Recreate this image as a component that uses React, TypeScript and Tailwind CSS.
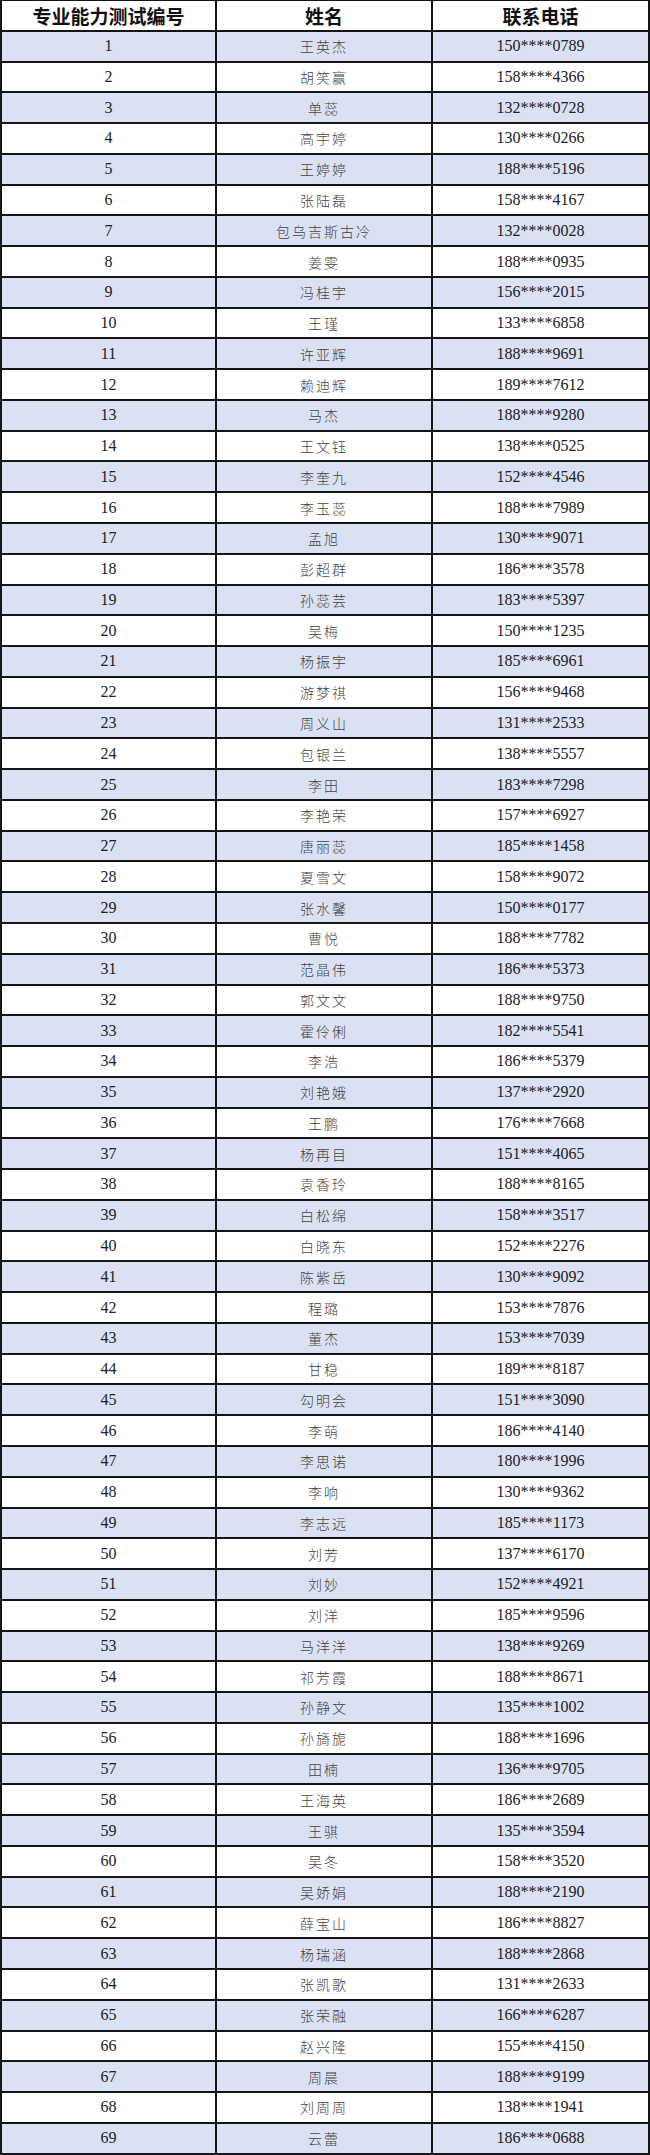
import React from "react";

const raw = `王英杰 150****0789
胡笑赢 158****4366
单蕊 132****0728
高宇婷 130****0266
王婷婷 188****5196
张陆磊 158****4167
包乌吉斯古冷 132****0028
姜雯 188****0935
冯桂宇 156****2015
王瑾 133****6858
许亚辉 188****9691
赖迪辉 189****7612
马杰 188****9280
王文钰 138****0525
李奎九 152****4546
李玉蕊 188****7989
孟旭 130****9071
彭超群 186****3578
孙蕊芸 183****5397
吴梅 150****1235
杨振宇 185****6961
游梦祺 156****9468
周义山 131****2533
包银兰 138****5557
李田 183****7298
李艳荣 157****6927
唐丽蕊 185****1458
夏雪文 158****9072
张水馨 150****0177
曹悦 188****7782
范晶伟 186****5373
郭文文 188****9750
霍伶俐 182****5541
李浩 186****5379
刘艳娥 137****2920
王鹏 176****7668
杨再目 151****4065
袁香玲 188****8165
白松绵 158****3517
白晓东 152****2276
陈紫岳 130****9092
程璐 153****7876
董杰 153****7039
甘稳 189****8187
勾明会 151****3090
李萌 186****4140
李思诺 180****1996
李响 130****9362
李志远 185****1173
刘芳 137****6170
刘妙 152****4921
刘洋 185****9596
马洋洋 138****9269
祁芳霞 188****8671
孙静文 135****1002
孙旖旎 188****1696
田楠 136****9705
王海英 186****2689
王骐 135****3594
吴冬 158****3520
吴娇娟 188****2190
薛宝山 186****8827
杨瑞涵 188****2868
张凯歌 131****2633
张荣融 166****6287
赵兴隆 155****4150
周晨 188****9199
刘周周 138****1941
云蕾 186****0688`;

const rows = raw.split("\n").map((l, i) => {
  const [name, phone] = l.split(" ");
  return { id: i + 1, name, phone };
});

const serif = "font-['Liberation_Serif','Noto_Sans_CJK_SC',serif]";
const cjk = "font-['Noto_Sans_CJK_SC',sans-serif]";

export default function App() {
  return (
    <div className="h-[2155px] w-[650px] overflow-hidden bg-white">
      <div className="w-[650px] border-t border-l-2 border-[#151515]">
        <div className="grid h-[30.78px] grid-cols-[215px_216px_217px]">
          {["专业能力测试编号", "姓名", "联系电话"].map((h) => (
            <div
              key={h}
              className={`flex items-center justify-center border-r-2 border-b-2 border-[#151515] text-[19px] font-bold leading-none text-[#111] ${cjk}`}
            >
              {h}
            </div>
          ))}
        </div>
        {rows.map((r) => {
          const bg = r.id % 2 === 1 ? "bg-[#d9e1f2]" : "bg-white";
          return (
            <div
              key={r.id}
              className={`grid h-[30.78px] grid-cols-[215px_216px_217px] ${bg}`}
            >
              <div
                className={`flex items-center justify-center border-r-2 border-b-2 border-[#151515] text-[16px] leading-none text-[#222] ${serif}`}
              >
                {r.id}
              </div>
              <div
                className={`flex items-center justify-center border-r-2 border-b-2 border-[#151515] text-[14px] font-light leading-none tracking-[2px] text-[#444] ${cjk}`}
              >
                {r.name}
              </div>
              <div
                className={`flex items-center justify-center border-r-2 border-b-2 border-[#151515] text-[16px] leading-none text-[#222] ${serif}`}
              >
                {r.phone}
              </div>
            </div>
          );
        })}
      </div>
    </div>
  );
}
